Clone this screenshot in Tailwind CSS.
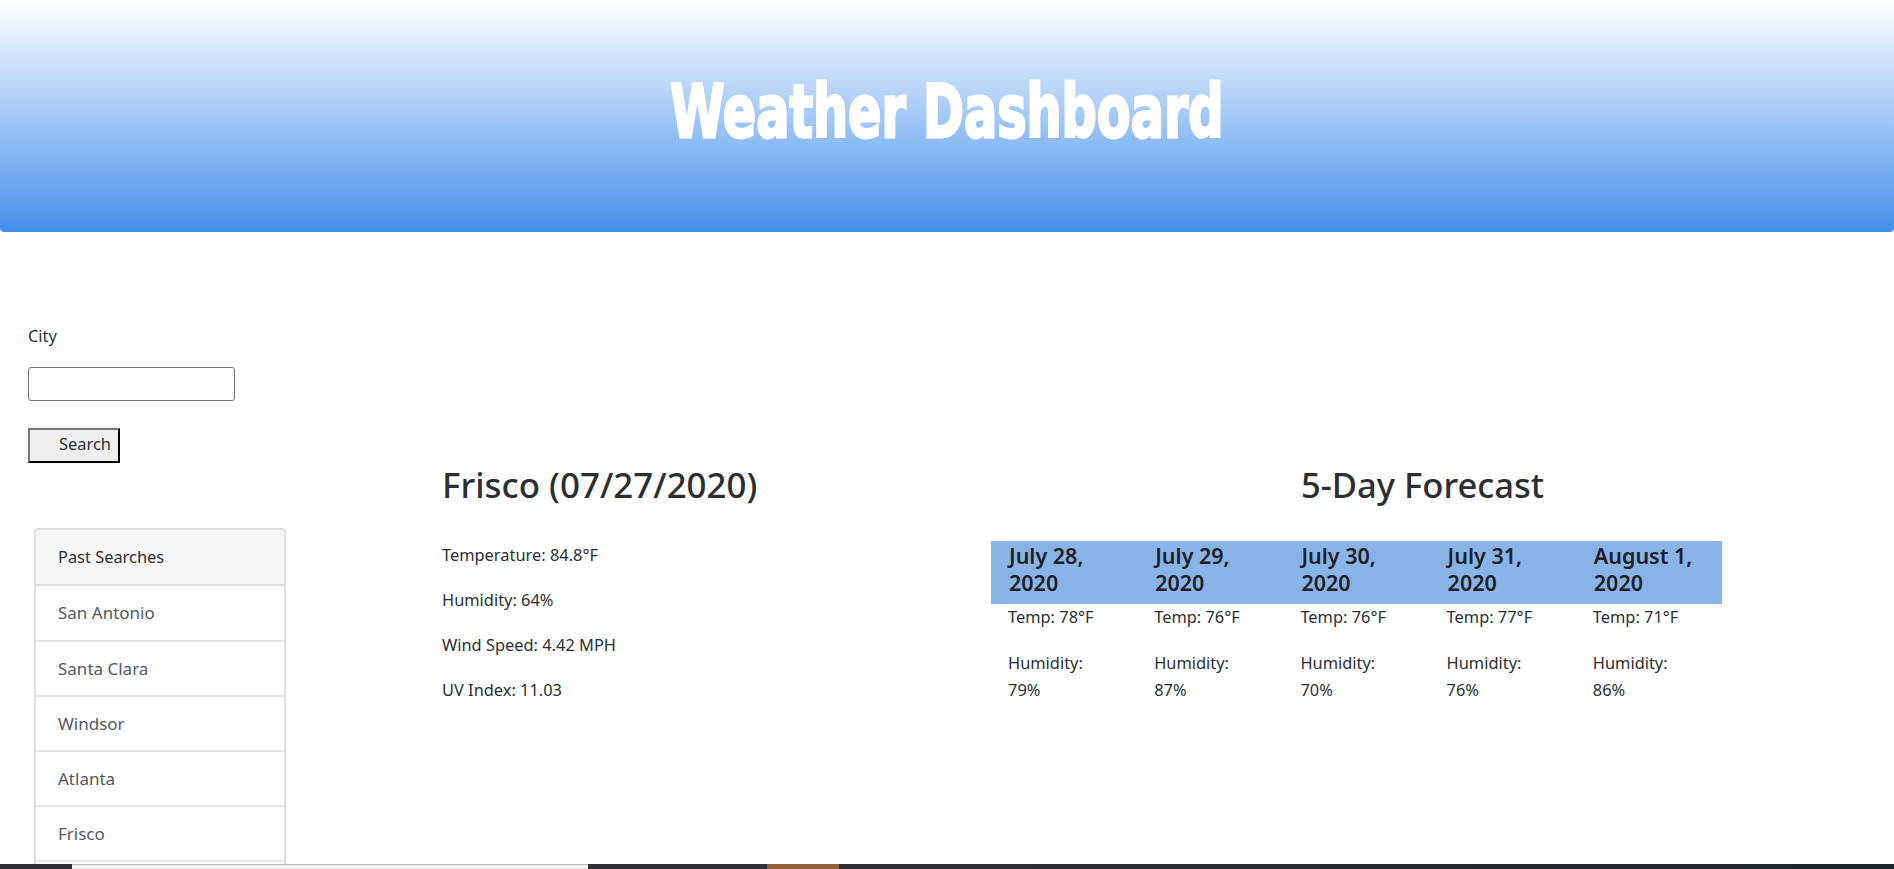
<!DOCTYPE html>
<html lang="en">
<head>
    <meta charset="UTF-8">
    <title>Weather Dashboard</title>
    <script src="https://cdn.jsdelivr.net/npm/@tailwindcss/browser@4"></script>
</head>
<body class="h-[869px] overflow-hidden flex flex-col bg-white text-[#2b2f33] text-[16.4px] font-['Noto_Sans',sans-serif]">
    <!--header-->
    <header class="h-[232px] shrink-0 rounded-b-[4px] bg-gradient-to-b from-white to-[#4290e8] flex items-center justify-center pb-[10px]">
        <h1 class="whitespace-nowrap text-white text-[73px] leading-none font-bold font-['DejaVu_Sans',sans-serif] scale-x-[0.675] [-webkit-text-stroke:3px_white]">Weather Dashboard</h1>
    </header>

    <main class="flex-1 min-h-0 flex overflow-hidden">
        <!--search + past searches-->
        <aside class="w-[442px] shrink-0 pl-[28px] pt-[92px]">
            <label for="city" class="block leading-6">City</label>
            <input id="city" type="text" class="block mt-[19px] w-[207px] h-[34px] border border-[#767676] rounded-[3px]">
            <button class="block mt-[27px] w-[92px] h-[35px] pl-[29px] pb-[2px] text-left bg-[#efefef] border-2 border-t-[#767676] border-l-[#767676] border-r-black border-b-black">Search</button>
            <div class="mt-[65px] ml-[6px] w-[252px] border-2 border-b-0 border-[#e0e0e0] rounded-t-[4px]">
                <div class="h-[56px] pl-[22px] pt-[1px] flex items-center bg-[#f7f7f7] border-b-2 border-[#e0e0e0]">Past Searches</div>
                <ul class="text-[#55595e] text-[17px]">
                    <li class="h-[56px] pl-[22px] flex items-center border-b-2 border-[#e6e6e6]">San Antonio</li>
                    <li class="h-[55px] pl-[22px] flex items-center border-b-2 border-[#e6e6e6]">Santa Clara</li>
                    <li class="h-[55px] pl-[22px] flex items-center border-b-2 border-[#e6e6e6]">Windsor</li>
                    <li class="h-[55px] pl-[22px] flex items-center border-b-2 border-[#e6e6e6]">Atlanta</li>
                    <li class="h-[55px] pl-[22px] flex items-center border-b-2 border-[#e6e6e6]">Frisco</li>
                    <li class="h-[55px]"></li>
                </ul>
            </div>
        </aside>

        <!--current weather-->
        <section class="w-[549px] shrink-0 pt-[234px]">
            <h2 class="text-[34.9px] leading-[38px] font-medium">Frisco (07/27/2020)</h2>
            <p class="mt-[39px] leading-6">Temperature: 84.8°F</p>
            <p class="mt-[21px] leading-6">Humidity: 64%</p>
            <p class="mt-[21px] leading-6">Wind Speed: 4.42 MPH</p>
            <p class="mt-[21px] leading-6">UV Index: 11.03</p>
        </section>

        <!--5 day forecast-->
        <section class="w-[731px] shrink-0 pt-[234px]">
            <h2 class="text-[34.6px] leading-[38px] font-medium text-center pl-[132px]">5-Day Forecast</h2>
            <div class="mt-[37px] grid grid-cols-5">
                <div class="col-span-5 grid grid-cols-5 bg-[#8ab4e8] text-[21.5px] leading-[26.5px] font-semibold h-[63px] text-[#1d2125]">
                    <div class="pl-[18px] pr-6 pt-[2px]">July 28, 2020</div>
                    <div class="pl-[18px] pr-6 pt-[2px]">July 29, 2020</div>
                    <div class="pl-[18px] pr-6 pt-[2px]">July 30, 2020</div>
                    <div class="pl-[18px] pr-6 pt-[2px]">July 31, 2020</div>
                    <div class="pl-[18px] pr-4 pt-[2px]">August 1, 2020</div>
                </div>
                <div class="pl-[17px] pr-8 pt-[1px]"><p class="leading-6">Temp: 78°F</p><p class="mt-[20px] leading-[27px]">Humidity: 79%</p></div>
                <div class="pl-[17px] pr-8 pt-[1px]"><p class="leading-6">Temp: 76°F</p><p class="mt-[20px] leading-[27px]">Humidity: 87%</p></div>
                <div class="pl-[17px] pr-8 pt-[1px]"><p class="leading-6">Temp: 76°F</p><p class="mt-[20px] leading-[27px]">Humidity: 70%</p></div>
                <div class="pl-[17px] pr-8 pt-[1px]"><p class="leading-6">Temp: 77°F</p><p class="mt-[20px] leading-[27px]">Humidity: 76%</p></div>
                <div class="pl-[17px] pr-8 pt-[1px]"><p class="leading-6">Temp: 71°F</p><p class="mt-[20px] leading-[27px]">Humidity: 86%</p></div>
            </div>
        </section>
    </main>

    <!--bottom strip-->
    <div class="h-[5px] shrink-0 flex bg-gradient-to-r from-[#2e3033] from-50% to-[#1c2329]">
        <div class="w-[72px]"></div>
        <div class="w-[516px] bg-[#f0f0f0] border-t border-[#b4b4b4]"></div>
        <div class="ml-[179px] w-[72px] bg-[#8f5f3a]"></div>
    </div>
</body>
</html>
